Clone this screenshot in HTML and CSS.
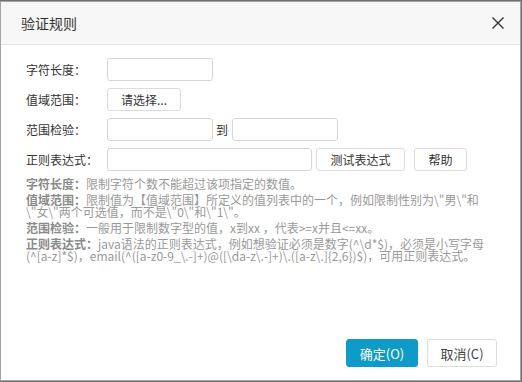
FILE: index.html
```html
<!DOCTYPE html>
<html lang="zh-CN">
<head>
  <meta charset="UTF-8" />
  <title>验证规则</title>
  <link rel="stylesheet" href="styles.css">
</head>
<body>

  <div class="dialog">
    <div class="dialog-header">
      <span class="dialog-title">验证规则</span>
      <span class="dialog-close">
        <svg width="12" height="12" viewBox="0 0 12 12">
          <path d="M0.5 0.5 L11.5 11.5 M11.5 0.5 L0.5 11.5" stroke="#333" stroke-width="1.4" fill="none"/>
        </svg>
      </span>
    </div>

    <div class="dialog-body">
      <div class="form-row">
        <label class="form-label">字符长度：</label>
        <input type="text" class="text-input">
      </div>
      <div class="form-row">
        <label class="form-label">值域范围：</label>
        <button class="btn btn-choose">请选择...</button>
      </div>
      <div class="form-row">
        <label class="form-label">范围检验：</label>
        <input type="text" class="text-input">
        <span class="range-to">到</span>
        <input type="text" class="text-input">
      </div>
      <div class="form-row">
        <label class="form-label">正则表达式：</label>
        <input type="text" class="text-input wide">
        <button class="btn btn-test">测试表达式</button>
        <button class="btn btn-help">帮助</button>
      </div>

      <div class="help">
        <p><b>字符长度：</b>限制字符个数不能超过该项指定的数值。</p>
        <p><b>值域范围：</b>限制值为【值域范围】所定义的值列表中的一个，例如限制性别为\"男\"和\"女\"两个可选值，而不是\"0\"和\"1\"。</p>
        <p><b>范围检验：</b>一般用于限制数字型的值，x到xx ，代表&gt;=x并且&lt;=xx。</p>
        <p><b>正则表达式：</b>java语法的正则表达式，例如想验证必须是数字(^\d*$)，必须是小写字母(^[a-z]*$)，email(^([a-z0-9_\.-]+)@([\da-z\.-]+)\.([a-z\.]{2,6})$)，可用正则表达式。</p>
      </div>
    </div>

    <div class="dialog-footer">
      <button class="btn btn-primary">确定(O)</button>
      <button class="btn btn-cancel">取消(C)</button>
    </div>
  </div>

</body>
</html>
```

FILE: styles.css
```css
html, body {
  margin: 0;
  height: 100%;
}

body {
  background: #6f6f6f;
  font-family: "Noto Sans CJK SC", "Noto Sans", sans-serif;
  font-size: 12px;
  color: #333;
}

.dialog {
  width: 521px;
  height: 380px;
  margin-top: 1px;
  box-sizing: border-box;
  border: 1px solid #a3a3a3;
  background: #fff;
  display: flex;
  flex-direction: column;
}

.dialog-header {
  height: 42px;
  flex-shrink: 0;
  background: #f7f7f7;
  border-bottom: 1px solid #e6e6e6;
  display: flex;
  align-items: center;
  justify-content: space-between;
  padding: 0 16px 0 20px;
}

.dialog-title {
  font-size: 14px;
  color: #333;
}

.dialog-close {
  display: flex;
  width: 12px;
  height: 12px;
}

.dialog-body {
  flex: 1;
  padding: 13px 0 0 25px;
}

.form-row {
  display: flex;
  align-items: center;
  height: 23px;
  margin-bottom: 7px;
}

.form-label {
  width: 81px;
  flex-shrink: 0;
  color: #333;
}

.text-input {
  width: 106px;
  height: 23px;
  box-sizing: border-box;
  border: 1px solid #d6d6d6;
  border-radius: 3px;
  padding: 0 5px;
  margin: 0;
  font-size: 12px;
}

.text-input.wide {
  width: 205px;
}

.range-to {
  margin: 0 4px 0 3px;
}

.btn {
  height: 23px;
  box-sizing: border-box;
  border: 1px solid #dcdcdc;
  border-radius: 3px;
  background: #fff;
  color: #333;
  font-family: inherit;
  font-size: 12px;
  padding: 0;
  margin: 0;
  cursor: pointer;
}

.btn-choose {
  width: 74px;
}

.btn-test {
  width: 89px;
  margin-left: 4px;
}

.btn-help {
  width: 53px;
  margin-left: 9px;
}

.help {
  margin-top: 2px;
  width: 466px;
  color: #999;
  line-height: 12px;
}

.help p {
  margin: 0 0 4px;
}

.help b {
  color: #8a8a8a;
}

.dialog-footer {
  display: flex;
  justify-content: flex-end;
  gap: 9px;
  padding: 0 23px 13px 0;
}

.dialog-footer .btn {
  height: 28px;
  font-size: 13px;
}

.btn-primary {
  width: 72px;
  background: #0f9bc7;
  border-color: #0f9bc7;
  color: #fff;
}

.btn-cancel {
  width: 70px;
  color: #444;
}
```
